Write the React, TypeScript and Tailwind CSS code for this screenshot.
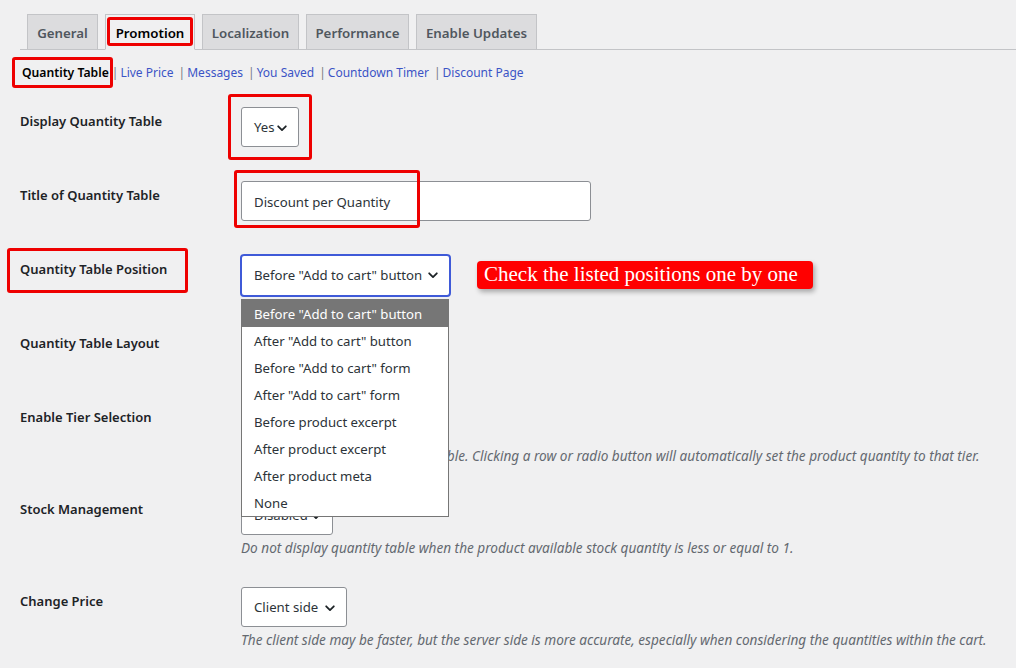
import React from 'react';

const tabs = [
  { name: 'General', w: 'w-[71px]' },
  { name: 'Promotion', w: 'w-[90px]', active: true },
  { name: 'Localization', w: 'w-[97px]' },
  { name: 'Performance', w: 'w-[103px]' },
  { name: 'Enable Updates', w: 'w-[121px]' },
];

const subLinks = ['Live Price', 'Messages', 'You Saved', 'Countdown Timer', 'Discount Page'];

const positions = [
  'Before "Add to cart" button',
  'After "Add to cart" button',
  'Before "Add to cart" form',
  'After "Add to cart" form',
  'Before product excerpt',
  'After product excerpt',
  'After product meta',
  'None',
];

function Chevron() {
  return (
    <svg width="10" height="7" viewBox="0 0 10 7" className="shrink-0">
      <path d="M1.2 1.3L5 5.1l3.8-3.8" fill="none" stroke="#1d2327" strokeWidth="1.8" strokeLinecap="round" strokeLinejoin="round" />
    </svg>
  );
}

function Select({ value, className = '' }: { value: string; className?: string }) {
  return (
    <div
      className={`flex h-[40px] items-center justify-between rounded-[3px] border bg-white pr-[11px] text-[13.2px] text-[#2c3338] ${className}`}
    >
      <span className="whitespace-nowrap">{value}</span>
      <Chevron />
    </div>
  );
}

function Mark({ className }: { className: string }) {
  return <span className={`pointer-events-none absolute rounded-[3px] border-[3px] border-[#ee0000] ${className}`} />;
}

function Desc({ children }: { children: React.ReactNode }) {
  return <p className="mt-[4px] whitespace-nowrap text-[13.6px] italic leading-[18px] text-[#646970]">{children}</p>;
}

function Row({
  label,
  tall,
  children,
}: {
  label: string;
  tall?: boolean;
  children: React.ReactNode;
}) {
  return (
    <div className={`relative flex ${tall ? 'h-[92px]' : 'h-[74px]'}`}>
      <div className="w-[241px] shrink-0 pl-[20px] pt-[21px] text-[13px] font-semibold leading-[20px] text-[#1d2327]">
        {label}
      </div>
      <div className="relative pt-[17px]">{children}</div>
    </div>
  );
}

export default function App() {
  return (
    <div className="relative h-[668px] w-[1016px] overflow-hidden bg-[#f0f0f1] font-['Noto_Sans',sans-serif]">
      {/* tabs */}
      <div className="pl-[20px] pt-[15px]">
        <div className="flex h-[35px] items-end gap-[7px] border-b border-[#c3c4c7] pl-[7px]">
          {tabs.map((t) => (
            <div
              key={t.name}
              className={`relative -mb-px flex h-[36px] items-center justify-center border border-[#c3c4c7] pt-[4px] text-[13.3px] font-semibold ${t.w} ${
                t.active ? 'border-b-[#f0f0f1] bg-[#f0f0f1] text-black' : 'bg-[#dcdcde] text-[#50575e]'
              }`}
            >
              {t.name}
              {t.active && <Mark className="left-[1px] top-[2px] h-[29px] w-[86px]" />}
            </div>
          ))}
        </div>
      </div>

      {/* sub navigation */}
      <div className="relative flex h-[40px] items-start pl-[22px] pt-[14px] text-[12px] leading-[18px]">
        <span className="text-[12.2px] font-semibold text-black">Quantity Table</span>
        {subLinks.map((l, i) => (
          <span key={l} className={`flex ${i === 0 ? 'ml-[3px]' : 'ml-[5px]'}`}>
            <span className="text-[#787c82]">|</span>
            <span className="ml-[2px] text-[#3b54c6]">{l}</span>
          </span>
        ))}
        <Mark className="left-[12px] top-[7px] h-[31px] w-[101px]" />
      </div>

      {/* settings */}
      <div>
        <Row label="Display Quantity Table">
          <Select value="Yes" className="w-[58px] border-[#8c8f94] pl-[12px] pt-[2px]" />
          <Mark className="-left-[13px] top-[4px] h-[66px] w-[84px]" />
        </Row>

        <Row label="Title of Quantity Table">
          <div className="flex h-[40px] w-[350px] items-center rounded-[3px] border border-[#8c8f94] bg-white px-[12px] pt-[3px] text-[13.2px] text-[#2c3338]">
            Discount per Quantity
          </div>
          <Mark className="-left-[7px] top-[6px] h-[58px] w-[186px]" />
        </Row>

        <Row label="Quantity Table Position">
          <div className="flex items-start">
            <div className="relative -ml-px -mt-px">
              <Select
                value={'Before "Add to cart" button'}
                className="h-[43px] w-[211px] rounded-[4px] border-2 border-[#3f5ad8] pl-[12px]"
              />
              <ul className="absolute left-px top-[45px] z-10 w-[208px] border border-[#767676] bg-white text-[13.2px] text-[#2c3338]">
                {positions.map((p, i) => (
                  <li
                    key={p}
                    className={`h-[27px] whitespace-nowrap px-[12px] pt-[1px] leading-[26px] ${i === 0 ? 'bg-[#767676] text-white' : ''}`}
                  >
                    {p}
                  </li>
                ))}
              </ul>
            </div>
            <div className="ml-[26px] mt-[6px] flex h-[28px] w-[336px] items-center rounded-[4px] bg-[#ff0000] pl-[7px] font-['Liberation_Serif',serif] text-[21px] text-white shadow-[2px_3px_5px_rgba(0,0,0,0.3)]">
              Check the listed positions one by one
            </div>
          </div>
          <Mark className="left-[-234px] top-[10px] h-[45px] w-[181px]" />
        </Row>

        <Row label="Quantity Table Layout">
          <Select value="Horizontal" className="w-[120px] border-[#8c8f94] pl-[12px] pt-[2px]" />
        </Row>

        <Row label="Enable Tier Selection" tall>
          <Select value="Disabled" className="w-[92px] border-[#8c8f94] pl-[12px] pt-[2px]" />
          <Desc>
            Enable selecting tiers within the table. Clicking a row or radio button will automatically set the product quantity to that tier.
          </Desc>
        </Row>

        <Row label="Stock Management" tall>
          <Select value="Disabled" className="w-[92px] border-[#8c8f94] pl-[12px] pt-[2px]" />
          <Desc>Do not display quantity table when the product available stock quantity is less or equal to 1.</Desc>
        </Row>

        <Row label="Change Price" tall>
          <Select value="Client side" className="w-[106px] border-[#8c8f94] pl-[12px] pt-[2px]" />
          <Desc>
            The client side may be faster, but the server side is more accurate, especially when considering the quantities within the cart.
          </Desc>
        </Row>
      </div>
    </div>
  );
}
